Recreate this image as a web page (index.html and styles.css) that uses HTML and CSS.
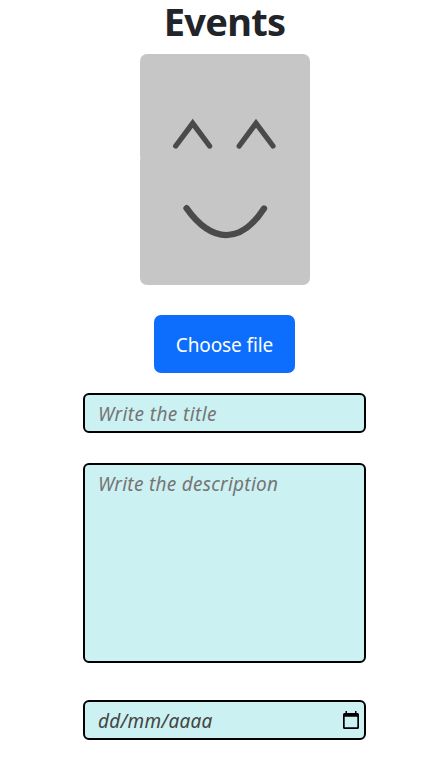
FILE: index.html
```html
<!DOCTYPE html>
<html lang="en">
<head>
<meta charset="utf-8">
<title>Events</title>
<link rel="stylesheet" href="styles.css">
</head>
<body>
<main class="events">
  <h1 class="title">Events</h1>
  <svg class="preview" viewBox="0 0 170 231" aria-hidden="true">
    <rect width="170" height="231" rx="7" fill="#c6c6c6"/>
    <path d="M0 102q1.500 2 0 4" fill="#e4e4e4"/>
    <g fill="none" stroke="#4a4a4a" stroke-linecap="round">
      <path stroke-width="5.300" d="M35.700 92 52.700 69.300 69.600 92M99.200 92 116 69.300 133 92"/>
      <path stroke-width="6.300" d="M46.500 154.200C72 190 101 190 124 154.500"/>
    </g>
  </svg>
  <button class="choose" type="button">Choose file</button>
  <form class="fields">
    <input class="field name" type="text" placeholder="Write the title">
    <textarea class="field description" placeholder="Write the description"></textarea>
    <div class="field date">
      <span>dd/mm/aaaa</span>
      <svg class="calendar" viewBox="0 0 16 18" aria-hidden="true">
        <path fill="#000" fill-rule="evenodd" d="M2.500 0H4v2h8V0h1.500v2H14.500Q16 2 16 3.500v13Q16 18 14.500 18h-13Q0 18 0 16.500v-13Q0 2 1.500 2h1zM1.700 5.700v10.600h12.600V5.700z"/>
      </svg>
    </div>
  </form>
</main>
</body>
</html>
```
FILE: styles.css
```css
* {
  box-sizing: border-box;
}

body {
  margin: 0;
  background: #fff;
  color: #212529;
  font-family: "Segoe UI", "Noto Sans", "Open Sans", sans-serif;
  overflow: hidden;
}

.events {
  display: flex;
  flex-direction: column;
  align-items: center;
  width: 449px;
}

.title {
  margin: 0;
  height: 54px;
  line-height: 43px;
  font-size: 38px;
  font-weight: 700;
  letter-spacing: -0.7px;
}

.preview {
  display: block;
  width: 170px;
  height: 231px;
}

.choose {
  width: 141px;
  height: 58px;
  margin: 30px 0 20px;
  padding: 2px 0 0;
  border: 0;
  border-radius: 7px;
  background: #0d6efd;
  color: #fff;
  font: 400 19px "Segoe UI", "Noto Sans", sans-serif;
  letter-spacing: -0.1px;
  white-space: nowrap;
}

.fields {
  display: flex;
  flex-direction: column;
  width: 283px;
}

.field {
  display: block;
  width: 100%;
  height: 40px;
  margin: 0 0 30px;
  padding: 2px 13px 0;
  border: 2px solid #000;
  border-radius: 6px;
  background: #ccf1f2;
  color: #444;
  font: italic 400 19px/36px "Segoe UI", "Noto Sans", sans-serif;
  letter-spacing: 0.27px;
}

.field::placeholder {
  color: #757575;
  opacity: 1;
}

.name {
  letter-spacing: 0.4px;
}

.description {
  height: 200px;
  margin-bottom: 37px;
  padding-top: 1px;
  resize: none;
}

.date {
  display: flex;
  align-items: center;
  justify-content: space-between;
  margin: 0;
  padding-right: 5px;
}

.calendar {
  width: 16px;
  height: 18px;
  margin-top: -2px;
}
```
